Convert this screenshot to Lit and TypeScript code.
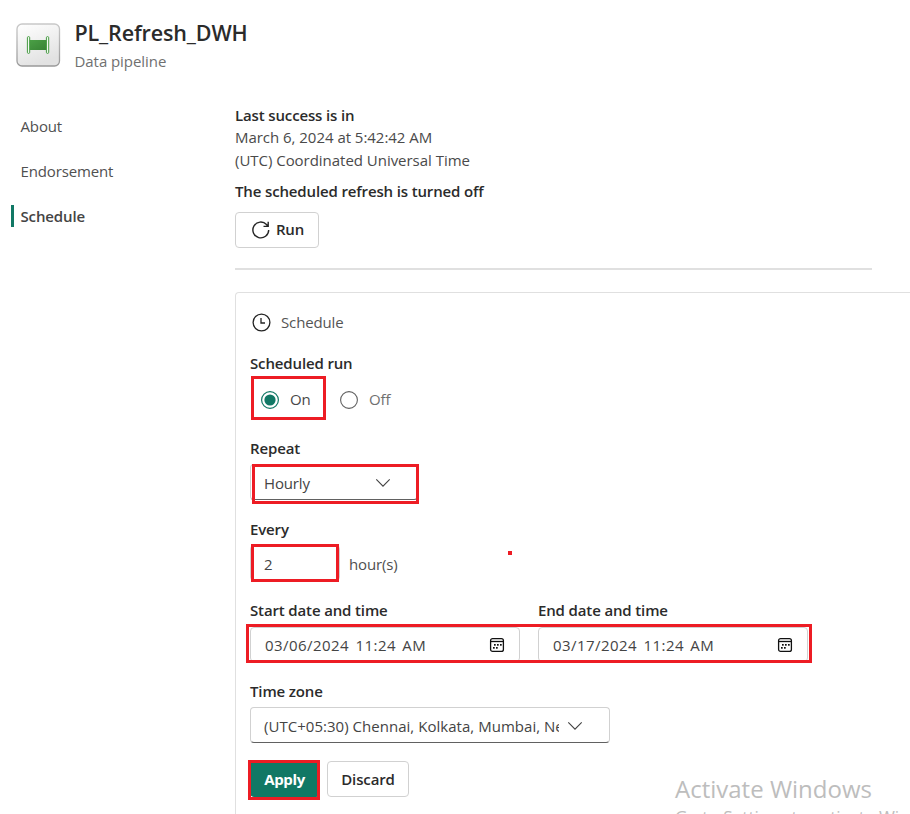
import { LitElement, html, css, svg } from "lit";
import { customElement, property } from "lit/decorators.js";

const chevron = html`<svg class="chev" width="16" height="10" viewBox="0 0 16 10" fill="none" stroke="#424242" stroke-width="1.1"><path d="M1.3 1.4 8 8.1l6.700-6.700"/></svg>`;

const calendar = html`<svg class="cal" width="16" height="16" viewBox="0 0 16 16" fill="none" stroke="#111" stroke-width="1.3">
  <rect x="1.600" y="1.600" width="12.800" height="12.800" rx="2"/><path d="M1.600 4.500h12.800"/>
  ${[[5, 7], [8, 7], [11, 7], [4, 10], [7, 10]].map(
    ([x, y]) => svg`<rect x=${x} y=${y} width="1.700" height="1.700" fill="#111" stroke="none"/>`
  )}
</svg>`;

@customElement("date-field")
class DateField extends LitElement {
  @property() label = "";
  @property() value = "";

  static styles = css`
    :host { display: block; width: 270px; }
    .label { font-weight: 600; line-height: 23px; margin-bottom: 5px; }
    .box { display: flex; align-items: center; justify-content: space-between; box-sizing: border-box;
      height: 35px; border: 1px solid #d1d1d1; border-radius: 4px; padding: 0 14px; color: #444; }
    .value { letter-spacing: 0.45px; word-spacing: 2px; padding-bottom: 0; }
    .cal { display: block; }
  `;

  render() {
    return html`<div class="label">${this.label}</div>
      <div class="box"><span class="value">${this.value}</span>${calendar}</div>`;
  }
}

@customElement("app-root")
class AppRoot extends LitElement {
  static styles = css`
    :host { display: block; position: relative; width: 910px; height: 814px; overflow: hidden; background: #fff;
      font: 400 15px/22px "Open Sans", "Noto Sans", sans-serif; letter-spacing: -0.14px; color: #2b2b2b; white-space: nowrap; }
    svg { display: block; flex: none; }
    .header { display: flex; height: 104px; padding: 22px 0 0 16px; box-sizing: border-box; }
    .names { margin-left: 13.500px; }
    .title { font-size: 21.5px; line-height: 22px; font-weight: 550; }
    .kind { color: #707070; line-height: 20px; margin-top: 7px; letter-spacing: -0.06px; }
    .body { display: flex; }
    nav { width: 235px; flex: none; padding-left: 11px; box-sizing: border-box; color: #505050; }
    .nav { line-height: 22px; height: 22px; margin: 11px 0 23px; padding: 0 0 0 9.500px; }
    .nav.on { border-left: 3px solid #117865; padding-left: 6.500px; font-weight: 600; color: #444; }
    main { width: 675px; flex: none; }
    .b { font-weight: 600; height: 22px; line-height: 22px; }
    .light { color: #4a4a4a; letter-spacing: -0.03px; }
    .l2 { line-height: 23px; }
    .off { margin-top: 9px; line-height: 21px; }
    .btn { display: inline-flex; align-items: center; justify-content: center; box-sizing: border-box; height: 36px;
      border: 1px solid #d1d1d1; border-radius: 4px; font-weight: 600; }
    .run { width: 84px; gap: 6px; margin-top: 9px; padding-left: 2px; }
    .run span { padding-bottom: 2px; }
    .rule { width: 637px; height: 2px; background: #e0e0e0; margin-top: 20px; }
    .card { box-sizing: border-box; height: 530px; margin-top: 22px; border: solid #e0e0e0; border-width: 1px 0 0 1px;
      border-radius: 4px 0 0 0; padding: 18px 0 0 14px; }
    .head { display: flex; align-items: center; gap: 10.500px; height: 23px; padding-left: 1.500px; color: #555; margin-bottom: 18px; }
    .head span { padding-bottom: 2px; }
    .radios { display: flex; align-items: center; height: 28px; margin: 12px 0 23px 11px; color: #484848; }
    .r1 { margin: 0 29px 0 11px; padding-bottom: 2px; }
    .r2 { margin-left: 11.500px; padding-bottom: 2px; color: #707070; }
    .field { height: 36px; box-sizing: border-box; border: 1px solid #d1d1d1; border-radius: 4px; padding: 2px 0 0 13px;
      display: flex; align-items: center; color: #444; margin: 5px 0 18px; }
    .select { border-bottom-color: #616161; }
    .repeat { width: 168px; }
    .repeat .text { width: 111px; }
    .row { display: flex; align-items: center; gap: 9px; margin: 5px 0 18px; }
    .row .field { width: 90px; margin: 0; }
    .unit { padding-top: 2px; color: #505050; }
    .dates { display: flex; gap: 18px; margin-bottom: 17px; height: 64px; }
    .zone { width: 360px; margin-bottom: 18px; }
    .zone .text { width: 295px; overflow: hidden; margin-right: 8px; letter-spacing: 0.03px; }
    .btns { display: flex; gap: 7px; }
    .apply { width: 70px; background: #117865; color: #fff; border-color: #117865; font-weight: 700; padding-right: 1px; letter-spacing: -0.35px; }
    .discard { width: 82px; }
    .mark { position: absolute; box-sizing: border-box; border: 3px solid #ed1c24; }
    .m1 { left: 251px; top: 376px; width: 75px; height: 44px; }
    .m2 { left: 252px; top: 464px; width: 167px; height: 40px; }
    .m3 { left: 251px; top: 544px; width: 88px; height: 38px; }
    .m4 { left: 246px; top: 624px; width: 566px; height: 39px; }
    .m5 { left: 248px; top: 760px; width: 72px; height: 40px; }
    .m6 { left: 508px; top: 551px; width: 4px; height: 4px; border-width: 2px; }
    .activate { position: absolute; left: 675px; top: 772px; color: #bdbdbd; font-size: 24px; line-height: 33px; letter-spacing: 0; }
    .goto { font-size: 17.2px; line-height: 24px; }
  `;

  render() {
    return html`
      <div class="header">
        <svg width="45" height="46" viewBox="0 0 45 46">
          <defs>
            <linearGradient id="tile" x1="0" y1="0" x2="0.4" y2="1"><stop stop-color="#fff"/><stop offset="1" stop-color="#e2e2e2"/></linearGradient>
            <linearGradient id="edge" x1="0" y1="0" x2="0" y2="1"><stop stop-color="#c8c8c8"/><stop offset="1" stop-color="#999"/></linearGradient>
            <linearGradient id="pipe" x1="0" y1="0" x2="1" y2="1"><stop stop-color="#4ba046"/><stop offset="1" stop-color="#378334"/></linearGradient>
          </defs>
          <rect x="1" y="2" width="42.500" height="42" rx="5" fill="url(#tile)" stroke="url(#edge)" stroke-width="1.300"/>
          <rect x="13" y="18" width="18" height="10" fill="url(#pipe)"/>
          <rect x="11.400" y="14.600" width="2.300" height="16.800" rx="1.100" fill="#f4faf3" stroke="#449a40"/>
          <rect x="30.400" y="14.600" width="2.300" height="16.800" rx="1.100" fill="#f4faf3" stroke="#449a40"/>
        </svg>
        <div class="names"><div class="title">PL_Refresh_DWH</div><div class="kind">Data pipeline</div></div>
      </div>
      <div class="body">
        <nav>
          <div class="nav">About</div>
          <div class="nav">Endorsement</div>
          <div class="nav on">Schedule</div>
        </nav>
        <main>
          <div class="b">Last success is in</div>
          <div class="light l2">March 6, 2024 at 5:42:42 AM</div>
          <div class="light l2">(UTC) Coordinated Universal Time</div>
          <div class="b off">The scheduled refresh is turned off</div>
          <div class="btn run">
            <svg width="18" height="18" viewBox="0 0 18 18" fill="none" stroke="#242424" stroke-width="1.400"><path d="M16.700 9A7.900 7.900 0 1 1 14.500 3.500L16 5.200M16.200.8v4.600h-4.700"/></svg>
            <span>Run</span>
          </div>
          <div class="rule"></div>
          <div class="card">
            <div class="head">
              <svg width="19" height="19" viewBox="0 0 19 19" fill="none" stroke="#242424" stroke-width="1.300"><circle cx="9.500" cy="9.500" r="8.400"/><path d="M9 5v5h4"/></svg>
              <span>Schedule</span>
            </div>
            <div class="b">Scheduled run</div>
            <div class="radios">
              <svg width="18" height="18" viewBox="0 0 18 18"><circle cx="9" cy="9" r="8.400" fill="none" stroke="#117865" stroke-width="1.200"/><circle cx="9" cy="9" r="5.600" fill="#117865"/></svg>
              <span class="r1">On</span>
              <svg width="18" height="18" viewBox="0 0 18 18"><circle cx="9" cy="9" r="8.400" fill="none" stroke="#616161" stroke-width="1.100"/></svg>
              <span class="r2">Off</span>
            </div>
            <div class="b">Repeat</div>
            <div class="field select repeat"><span class="text">Hourly</span>${chevron}</div>
            <div class="b">Every</div>
            <div class="row"><div class="field">2</div><span class="unit">hour(s)</span></div>
            <div class="dates">
              <date-field label="Start date and time" value="03/06/2024 11:24 AM"></date-field>
              <date-field label="End date and time" value="03/17/2024 11:24 AM"></date-field>
            </div>
            <div class="b">Time zone</div>
            <div class="field select zone"><span class="text">(UTC+05:30) Chennai, Kolkata, Mumbai, New Delhi</span>${chevron}</div>
            <div class="btns"><div class="btn apply">Apply</div><div class="btn discard">Discard</div></div>
          </div>
        </main>
      </div>
      <div class="activate"><div>Activate Windows</div><div class="goto">Go to Settings to activate Windows.</div></div>
      <div class="mark m1"></div><div class="mark m2"></div><div class="mark m3"></div>
      <div class="mark m4"></div><div class="mark m5"></div><div class="mark m6"></div>
    `;
  }
}
